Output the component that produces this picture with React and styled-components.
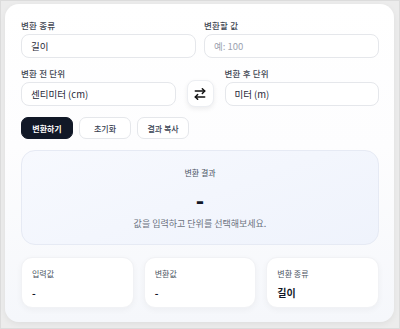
import styled, { createGlobalStyle } from "styled-components";

const Global = createGlobalStyle`
  html, body { margin: 0; padding: 0; }
  body {
    background: #ececec;
    font-family: "Noto Sans CJK KR", "Noto Sans", sans-serif;
    color: #111827;
  }
  * { box-sizing: border-box; }
`

const Frame = styled.div`
  width: 400px;
  height: 329px;
  border: 1px solid #dcdcdc;
  padding: 3px 5px 0 4px;
`

const Card = styled.section`
  background: linear-gradient(180deg, #ffffff 0%, #fdfdfe 45%, #f5f7fb 100%);
  border-radius: 14px;
  box-shadow: 0 2px 6px rgba(0,0,0,.06);
  padding: 16px 15px 14px 16px;
  display: flex;
  flex-direction: column;
`

const Row = styled.div`
  display: grid;
  grid-template-columns: ${p => p.$swap ? "1fr 27px 1fr" : "1fr 1fr"};
  column-gap: ${p => p.$swap ? "11px" : "8px"};
  align-items: end;
  margin-bottom: ${p => p.$mb || 0}px;
`

const Field = styled.div`
  display: flex;
  flex-direction: column;
  gap: 4px;
`

const Label = styled.label`
  font-size: 8.5px;
  line-height: 10px;
  font-weight: 500;
  letter-spacing: 0.2px;
  color: #3f4652;
`

const Input = styled.div`
  height: 24px;
  border: 1px solid #e5e7eb;
  border-radius: 8px;
  background: #fff;
  padding: 0 9px;
  display: flex;
  align-items: center;
  font-size: 9.5px;
  color: ${p => p.$placeholder ? "#9ca3af" : "#1f2937"};
`

const SwapButton = styled.button`
  width: 27px;
  height: 27px;
  margin-bottom: -1px;
  padding: 0;
  border: 1px solid #eceef2;
  border-radius: 8px;
  background: #fff;
  box-shadow: 0 2px 5px rgba(0,0,0,.07);
  display: flex;
  align-items: center;
  justify-content: center;
  color: #111;
`

const Actions = styled.div`
  display: flex;
  gap: 6px;
  margin-bottom: 11px;
`

const Button = styled.button`
  height: 22px;
  width: 52px;
  border-radius: 7px;
  font-family: inherit;
  font-size: 8px;
  font-weight: ${p => p.$primary ? 700 : 500};
  padding: 0;
  border: 1px solid ${p => p.$primary ? "#111827" : "#e5e7eb"};
  background: ${p => p.$primary ? "#111827" : "#fff"};
  color: ${p => p.$primary ? "#fff" : "#374151"};
`

const Result = styled.div`
  height: 95px;
  border-radius: 14px;
  border: 1px solid #e6eaf4;
  background: linear-gradient(160deg, #f7f9fe 0%, #eff3fc 100%);
  display: flex;
  flex-direction: column;
  align-items: center;
  padding-top: 16px;
  margin-bottom: 12px;
`

const ResultTitle = styled.div`
  font-size: 8px;
  line-height: 12px;
  color: #4b5563;
`

const ResultValue = styled.div`
  font-size: 22px;
  line-height: 24px;
  font-weight: 800;
  margin-top: 8px;
  color: #111827;
`

const ResultHint = styled.div`
  font-size: 9px;
  line-height: 12px;
  color: #6b7280;
  margin-top: 7px;
`

const Stats = styled.div`
  display: grid;
  grid-template-columns: repeat(3, 1fr);
  gap: 10px;
`

const Stat = styled.div`
  height: 51px;
  border-radius: 11px;
  background: #fff;
  border: 1px solid #f1f2f5;
  box-shadow: 0 2px 6px rgba(0,0,0,.04);
  padding: 11px 10px 0 10px;
  display: flex;
  flex-direction: column;
  gap: 8px;
`

const StatLabel = styled.div`
  font-size: 8px;
  line-height: 10px;
  color: #4b5563;
`

const StatValue = styled.div`
  font-size: 10px;
  line-height: 12px;
  font-weight: 700;
  color: #111827;
`

const SwapIcon = () => (
  <svg width="14" height="14" viewBox="0 0 24 24" fill="none" stroke="currentColor" strokeWidth="2.6" strokeLinecap="round" strokeLinejoin="round">
    <path d="m16 3 4 4-4 4" />
    <path d="M20 7H4" />
    <path d="m8 21-4-4 4-4" />
    <path d="M4 17h16" />
  </svg>
)

const App = () => {
  const stats = [
    { label: "입력값", value: "-" },
    { label: "변환값", value: "-" },
    { label: "변환 종류", value: "길이" },
  ]

  return (
    <>
      <Global />
      <Frame>
        <Card>
          <Row $mb={10}>
            <Field>
              <Label>변환 종류</Label>
              <Input>길이</Input>
            </Field>
            <Field>
              <Label>변환할 값</Label>
              <Input $placeholder>예: 100</Input>
            </Field>
          </Row>
          <Row $swap $mb={11}>
            <Field>
              <Label>변환 전 단위</Label>
              <Input>센티미터 (cm)</Input>
            </Field>
            <SwapButton aria-label="swap"><SwapIcon /></SwapButton>
            <Field>
              <Label>변환 후 단위</Label>
              <Input>미터 (m)</Input>
            </Field>
          </Row>
          <Actions>
            <Button $primary>변환하기</Button>
            <Button>초기화</Button>
            <Button>결과 복사</Button>
          </Actions>
          <Result>
            <ResultTitle>변환 결과</ResultTitle>
            <ResultValue>-</ResultValue>
            <ResultHint>값을 입력하고 단위를 선택해보세요.</ResultHint>
          </Result>
          <Stats>
            {stats.map(s => (
              <Stat key={s.label}>
                <StatLabel>{s.label}</StatLabel>
                <StatValue>{s.value}</StatValue>
              </Stat>
            ))}
          </Stats>
        </Card>
      </Frame>
    </>
  )
}

export default App
